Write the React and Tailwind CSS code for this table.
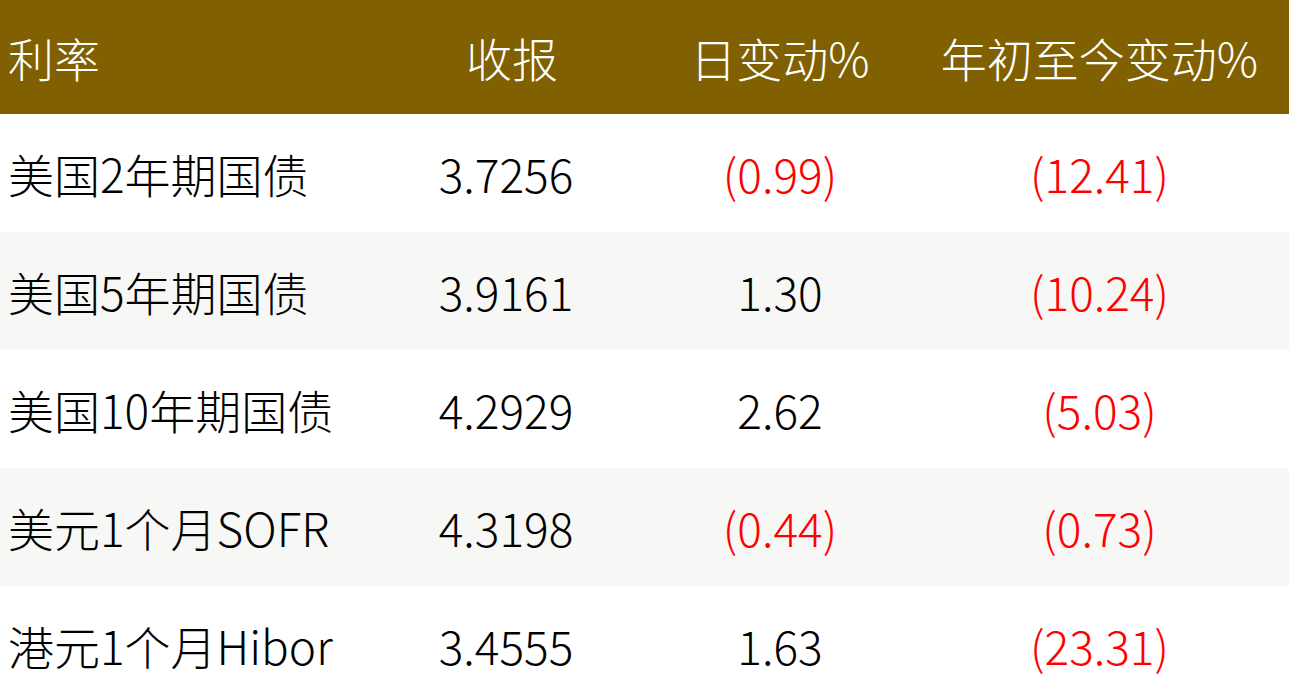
import React from 'react';

const rows = [
  { name: '美国2年期国债', close: '3.7256', day: '(0.99)', ytd: '(12.41)' },
  { name: '美国5年期国债', close: '3.9161', day: '1.30', ytd: '(10.24)' },
  { name: '美国10年期国债', close: '4.2929', day: '2.62', ytd: '(5.03)' },
  { name: '美元1个月SOFR', close: '4.3198', day: '(0.44)', ytd: '(0.73)' },
  { name: '港元1个月Hibor', close: '3.4555', day: '1.63', ytd: '(23.31)' },
];

const neg = (v) => v.startsWith('(');

export default function App() {
  return (
    <div className="w-[1289px] h-[694px] overflow-hidden bg-white font-light font-['Noto_Sans_CJK_SC','Noto_Sans',sans-serif]">
      <div className="grid grid-cols-[370px_280px_260px_379px] h-[114px] bg-[#806000] text-white text-[46px] items-center">
        <div className="pl-2">利率</div>
        <div className="text-center pl-1">收报</div>
        <div className="text-center">日变动%</div>
        <div className="text-center">年初至今变动%</div>
      </div>
      {rows.map((r, i) => (
        <div
          key={r.name}
          className={`grid grid-cols-[370px_280px_260px_379px] h-[118px] items-center text-[46px] text-black ${i % 2 ? 'bg-[#f7f7f5]' : 'bg-white'}`}
        >
          <div className="pl-2 whitespace-nowrap">{r.name}</div>
          <div className="text-center pr-2">{r.close}</div>
          <div className={`text-center ${neg(r.day) ? 'text-[#ff0000]' : ''}`}>{r.day}</div>
          <div className={`text-center ${neg(r.ytd) ? 'text-[#ff0000]' : ''}`}>{r.ytd}</div>
        </div>
      ))}
    </div>
  );
}
